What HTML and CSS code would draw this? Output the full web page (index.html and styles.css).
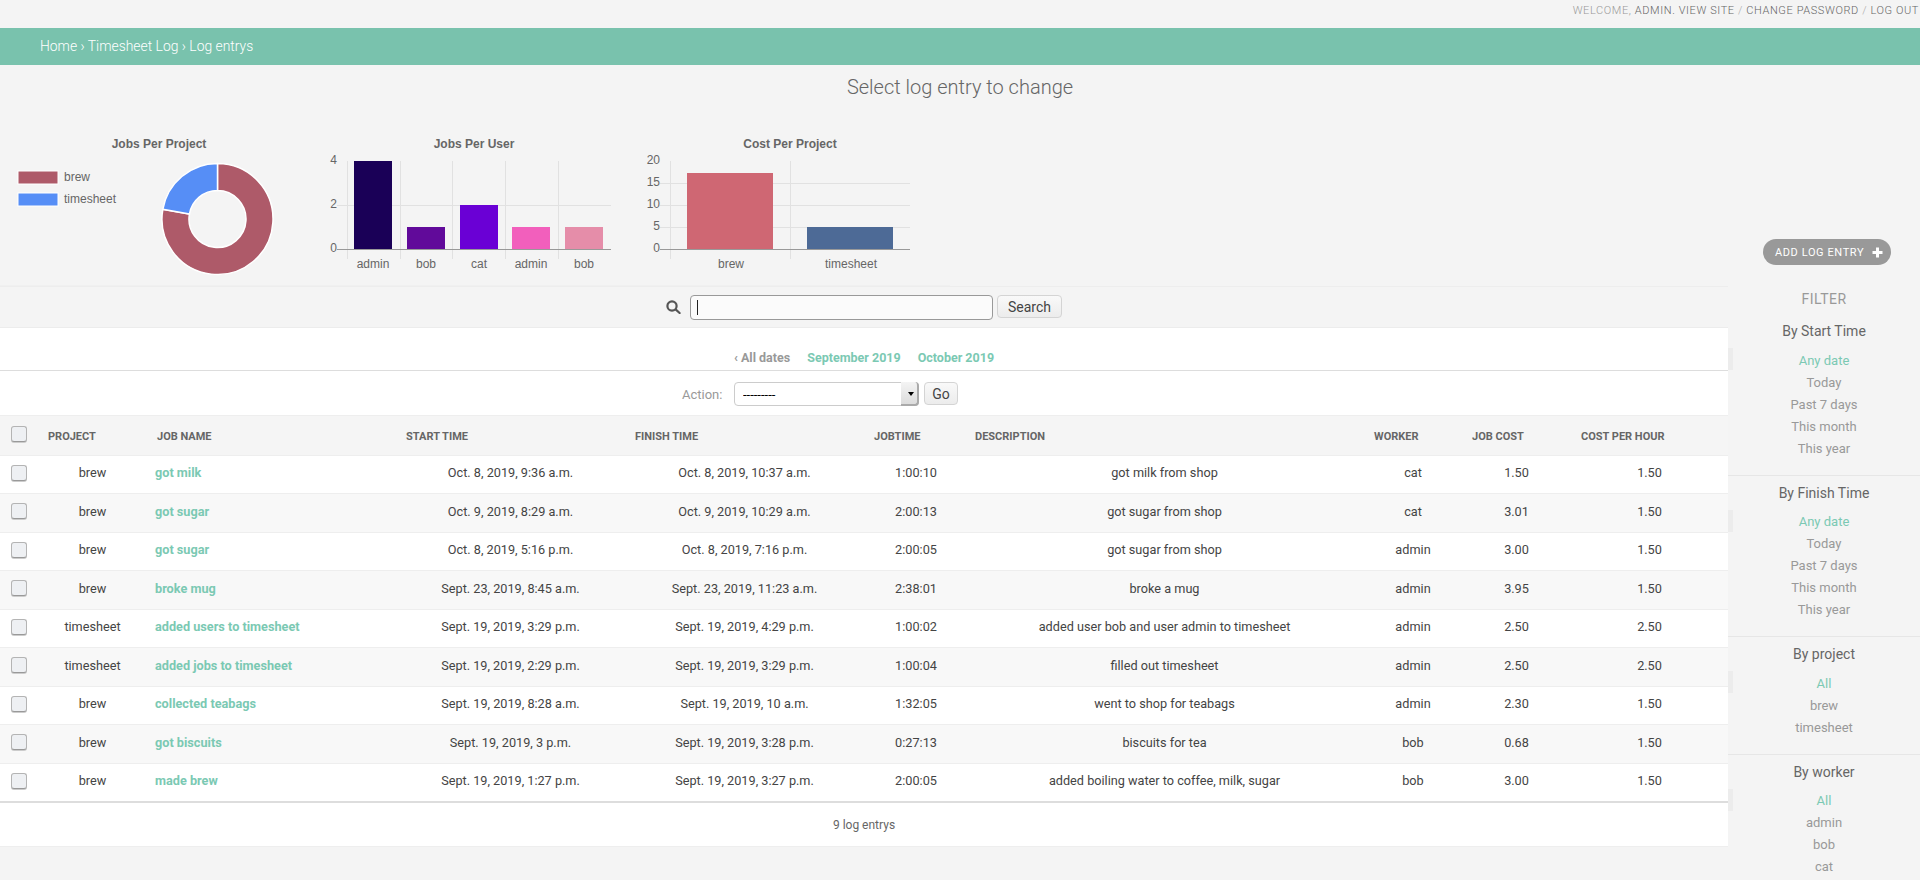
FILE: index.html
```html
<!DOCTYPE html>
<html lang="en">
<head>
<meta charset="utf-8">
<title>Select log entry to change</title>
<link rel="stylesheet" href="styles.css">
</head>
<body>
<div class="user-tools"><span class="welcome">Welcome,</span>&nbsp;<span class="who">Admin.</span>&nbsp;<a>View site</a> <span class="sep">/</span> <a>Change password</a> <span class="sep">/</span> <a>Log out</a></div>
<div class="crumbs"><a>Home</a> › <a>Timesheet Log</a> › Log entrys</div>
<h1 class="title">Select log entry to change</h1>
<div class="columns">
  <main class="main">
    <section class="charts">
      <svg class="chart chart-a" viewBox="0 110 310 175">
        <text class="chart-title" x="159" y="148">Jobs Per Project</text>
        <rect class="swatch" x="18" y="171" width="40" height="13" fill="#ae5a69"/>
        <text class="tick" x="64" y="181">brew</text>
        <rect class="swatch" x="18" y="193" width="40" height="13" fill="#568ef6"/>
        <text class="tick" x="64" y="203">timesheet</text>
        <path class="slice" fill="#ae5a69" d="M217.5 163.5A55.500 55.500 0 1 1 162.84 209.36L189.43 214.05A28.5 28.5 0 1 0 217.5 190.5Z"/>
        <path class="slice" fill="#568ef6" d="M162.84 209.36A55.500 55.500 0 0 1 217.5 163.5L217.5 190.5A28.5 28.5 0 0 0 189.43 214.05Z"/>
      </svg>
      <svg class="chart chart-b" viewBox="310 110 320 175">
        <text class="chart-title" x="474" y="148">Jobs Per User</text>
        <path class="grid" d="M347.5 161V259M400.5 161V259M452.5 161V259M505.5 161V259M558.5 161V259M337 205.500H611"/>
        <rect x="354" y="161" width="38" height="88" fill="#1a0057"/>
        <rect x="407" y="227" width="38" height="22" fill="#610a9a"/>
        <rect x="460" y="205" width="38" height="44" fill="#6a00d5"/>
        <rect x="512" y="227" width="38" height="22" fill="#f25fbc"/>
        <rect x="565" y="227" width="38" height="22" fill="#e58da9"/>
        <path class="axis" d="M337 249.5H611"/>
        <text class="tick end" x="337" y="164">4</text>
        <text class="tick end" x="337" y="208">2</text>
        <text class="tick end" x="337" y="252">0</text>
        <text class="tick mid" x="373" y="268">admin</text>
        <text class="tick mid" x="426" y="268">bob</text>
        <text class="tick mid" x="479" y="268">cat</text>
        <text class="tick mid" x="531" y="268">admin</text>
        <text class="tick mid" x="584" y="268">bob</text>
      </svg>
      <svg class="chart chart-c" viewBox="630 110 320 175">
        <text class="chart-title" x="790" y="148">Cost Per Project</text>
        <path class="grid" d="M670.5 161V259M790.5 161V259M660 183.5H910M660 205.500H910M660 227.500H910"/>
        <rect x="687" y="173" width="86" height="76" fill="#cf6773"/>
        <rect x="807" y="227" width="86" height="22" fill="#4d6a96"/>
        <path class="axis" d="M660 249.5H910"/>
        <text class="tick end" x="660" y="164">20</text>
        <text class="tick end" x="660" y="186">15</text>
        <text class="tick end" x="660" y="208">10</text>
        <text class="tick end" x="660" y="230">5</text>
        <text class="tick end" x="660" y="252">0</text>
        <text class="tick mid" x="731" y="268">brew</text>
        <text class="tick mid" x="851" y="268">timesheet</text>
      </svg>
    </section>
    <form class="toolbar">
      <svg class="search-icon" viewBox="0 0 15 14"><circle cx="6" cy="6" r="4.6"/><path d="M9.6 9.4L13.6 13"/></svg>
      <span class="search-field"><input class="search-input" type="text" value=""></span>
      <button class="btn search-btn" type="button">Search</button>
    </form>
    <nav class="dates">
      <a class="all-dates">‹ All dates</a>
      <a>September 2019</a>
      <a>October 2019</a>
    </nav>
    <div class="actions">
      <label class="action-label">Action:</label>
      <span class="select-wrap"><select class="select"><option>---------</option></select></span>
      <button class="btn go-btn" type="button">Go</button>
    </div>
    <table class="results">
      <colgroup>
        <col class="c-check"><col class="c-project"><col class="c-job"><col class="c-start"><col class="c-finish"><col class="c-time"><col class="c-desc"><col class="c-worker"><col class="c-cost"><col class="c-rate">
      </colgroup>
      <thead>
        <tr><th class="check"><input class="box" type="checkbox"></th><th>Project</th><th>Job name</th><th>Start time</th><th>Finish time</th><th>Jobtime</th><th>Description</th><th>Worker</th><th>Job cost</th><th>Cost per hour</th></tr>
      </thead>
      <tbody>
        <tr><td class="check"><input class="box" type="checkbox"></td><td>brew</td><td class="job"><a>got milk</a></td><td>Oct. 8, 2019, 9:36 a.m.</td><td>Oct. 8, 2019, 10:37 a.m.</td><td class="dur">1:00:10</td><td>got milk from shop</td><td>cat</td><td>1.50</td><td>1.50</td></tr>
        <tr><td class="check"><input class="box" type="checkbox"></td><td>brew</td><td class="job"><a>got sugar</a></td><td>Oct. 9, 2019, 8:29 a.m.</td><td>Oct. 9, 2019, 10:29 a.m.</td><td class="dur">2:00:13</td><td>got sugar from shop</td><td>cat</td><td>3.01</td><td>1.50</td></tr>
        <tr><td class="check"><input class="box" type="checkbox"></td><td>brew</td><td class="job"><a>got sugar</a></td><td>Oct. 8, 2019, 5:16 p.m.</td><td>Oct. 8, 2019, 7:16 p.m.</td><td class="dur">2:00:05</td><td>got sugar from shop</td><td>admin</td><td>3.00</td><td>1.50</td></tr>
        <tr><td class="check"><input class="box" type="checkbox"></td><td>brew</td><td class="job"><a>broke mug</a></td><td>Sept. 23, 2019, 8:45 a.m.</td><td>Sept. 23, 2019, 11:23 a.m.</td><td class="dur">2:38:01</td><td>broke a mug</td><td>admin</td><td>3.95</td><td>1.50</td></tr>
        <tr><td class="check"><input class="box" type="checkbox"></td><td>timesheet</td><td class="job"><a>added users to timesheet</a></td><td>Sept. 19, 2019, 3:29 p.m.</td><td>Sept. 19, 2019, 4:29 p.m.</td><td class="dur">1:00:02</td><td>added user bob and user admin to timesheet</td><td>admin</td><td>2.50</td><td>2.50</td></tr>
        <tr><td class="check"><input class="box" type="checkbox"></td><td>timesheet</td><td class="job"><a>added jobs to timesheet</a></td><td>Sept. 19, 2019, 2:29 p.m.</td><td>Sept. 19, 2019, 3:29 p.m.</td><td class="dur">1:00:04</td><td>filled out timesheet</td><td>admin</td><td>2.50</td><td>2.50</td></tr>
        <tr><td class="check"><input class="box" type="checkbox"></td><td>brew</td><td class="job"><a>collected teabags</a></td><td>Sept. 19, 2019, 8:28 a.m.</td><td>Sept. 19, 2019, 10 a.m.</td><td class="dur">1:32:05</td><td>went to shop for teabags</td><td>admin</td><td>2.30</td><td>1.50</td></tr>
        <tr><td class="check"><input class="box" type="checkbox"></td><td>brew</td><td class="job"><a>got biscuits</a></td><td>Sept. 19, 2019, 3 p.m.</td><td>Sept. 19, 2019, 3:28 p.m.</td><td class="dur">0:27:13</td><td>biscuits for tea</td><td>bob</td><td>0.68</td><td>1.50</td></tr>
        <tr><td class="check"><input class="box" type="checkbox"></td><td>brew</td><td class="job"><a>made brew</a></td><td>Sept. 19, 2019, 1:27 p.m.</td><td>Sept. 19, 2019, 3:27 p.m.</td><td class="dur">2:00:05</td><td>added boiling water to coffee, milk, sugar</td><td>bob</td><td>3.00</td><td>1.50</td></tr>
      </tbody>
    </table>
    <p class="paginator">9 log entrys</p>
    <span class="tab tab-1"></span>
    <span class="tab tab-2"></span>
    <span class="tab tab-3"></span>
    <span class="tab tab-4"></span>
  </main>
  <aside class="side">
    <a class="add-btn">Add log entry<svg class="plus" viewBox="0 0 11 11"><path d="M4 .5h3V4h3.500v3H7v3.500H4V7H.5V4H4z"/></svg></a>
    <h2 class="filter-title">Filter</h2>
    <section class="filter">
      <h3>By Start Time</h3>
      <ul><li class="on">Any date</li><li>Today</li><li>Past 7 days</li><li>This month</li><li>This year</li></ul>
    </section>
    <section class="filter">
      <h3>By Finish Time</h3>
      <ul><li class="on">Any date</li><li>Today</li><li>Past 7 days</li><li>This month</li><li>This year</li></ul>
    </section>
    <section class="filter">
      <h3>By project</h3>
      <ul><li class="on">All</li><li>brew</li><li>timesheet</li></ul>
    </section>
    <section class="filter">
      <h3>By worker</h3>
      <ul><li class="on">All</li><li>admin</li><li>bob</li><li>cat</li></ul>
    </section>
  </aside>
</div>
</body>
</html>
```

FILE: styles.css
```css
* { box-sizing: border-box; }
html, body { margin: 0; height: 880px; overflow: hidden; }
body { background: #f4f4f4; color: #444; font-family: Roboto, "Liberation Sans", sans-serif; font-size: 13px; }
h1, h2, h3, p, ul { margin: 0; padding: 0; }
ul { list-style: none; }

.user-tools { height: 28px; padding-right: 1px; line-height: 22px; text-align: right; text-transform: uppercase; font-size: 11px; font-weight: 300; letter-spacing: .6px; color: #999; white-space: nowrap; }
.user-tools a, .user-tools .who { color: #666; }
.user-tools .sep { color: #aaa; }

.crumbs { height: 37px; padding-left: 40px; line-height: 36px; background: #79c2ad; color: #fff; font-size: 13.9px; font-weight: 300; }

.title { height: 45px; padding-top: 10px; line-height: 24px; text-align: center; font-size: 20px; font-weight: 300; color: #666; }

.columns { display: flex; align-items: flex-start; }
.main { position: relative; flex: 0 0 1728px; width: 1728px; }
.side { flex: 0 0 192px; width: 192px; padding-top: 129px; text-align: center; }

.charts { display: flex; width: 950px; height: 177px; border-bottom: 2px solid #f0f0f0; }
.chart { display: block; height: 175px; font-family: "Liberation Sans", Arial, sans-serif; }
.chart-a { width: 310px; }
.chart-b, .chart-c { width: 320px; }
.chart-title { font-size: 12px; font-weight: 700; fill: #666; text-anchor: middle; }
.tick { font-size: 12px; fill: #666; }
.tick.end { text-anchor: end; }
.tick.mid { text-anchor: middle; }
.swatch { stroke: #fff; stroke-width: 1; }
.slice { stroke: #fff; stroke-width: 1.5; }
.grid { fill: none; stroke: #e1e1e1; stroke-width: 1; }
.axis { fill: none; stroke: #999; stroke-width: 1; }

.toolbar { display: flex; justify-content: center; align-items: flex-start; gap: 4px; height: 42px; padding-top: 8px; border-top: 1px solid #ededed; border-bottom: 1px solid #ececec; margin-top: -1px; }
.search-icon { width: 15px; height: 14px; margin: 5px 5px 0 0; fill: none; stroke: #555; stroke-width: 2.2; stroke-linecap: round; }
.search-field { position: relative; display: block; }
.search-field::after { content: ""; position: absolute; left: 7px; top: 5px; width: 1px; height: 15px; background: #222; }
.search-input { display: block; width: 303px; height: 25px; padding: 0 6px; background: #fbfbfb; border: 1px solid #999; border-radius: 4px; outline: 0; font: inherit; }
.btn { display: block; background: linear-gradient(#f9f9f9, #ececec); border: 1px solid #d4d4d4; border-radius: 4px; color: #444; font-family: inherit; font-size: 14px; padding: 0; }
.search-btn { width: 65px; height: 23px; }

.dates { display: flex; justify-content: center; align-items: flex-end; gap: 17px; height: 43px; padding-bottom: 4px; background: #fff; border-bottom: 1px solid #ddd; font-size: 12.5px; font-weight: 700; line-height: 16px; color: #7bc9b3; }
.all-dates { color: #999; }

.actions { display: flex; align-items: flex-start; height: 45px; padding: 11px 0 0 682px; background: #fff; border-bottom: 1px solid #eee; }
.action-label { width: 52px; line-height: 25px; color: #999; }
.select-wrap { position: relative; display: block; margin-right: 5px; }
.select-wrap::after { content: ""; position: absolute; right: 0; top: 0; bottom: 0; width: 16px; background: linear-gradient(#f4f4f4, #dcdcdc); border-right: 2px solid #aaa; border-bottom: 2px solid #aaa; border-radius: 0 4px 4px 0; }
.select-wrap::before { content: ""; position: absolute; z-index: 1; right: 5px; top: 10px; border-style: solid; border-width: 4px 3px 0; border-color: #000 transparent transparent; }
.select { display: block; appearance: none; width: 185px; height: 24px; padding: 0 8px; background: #fff; border: 1px solid #ccc; border-radius: 4px; color: #000; font-family: inherit; font-size: 13px; }
.go-btn { width: 34px; height: 23px; }

.results { table-layout: fixed; width: 1728px; border-collapse: collapse; background: #fff; border-bottom: 2px solid #ddd; }
.c-check { width: 38px; }
.c-project { width: 109px; }
.c-job { width: 249px; }
.c-start { width: 229px; }
.c-finish { width: 239px; }
.c-time { width: 101px; }
.c-desc { width: 399px; }
.c-worker { width: 98px; }
.c-cost { width: 109px; }
.c-rate { width: 157px; }
.results th { height: 39px; padding: 3px 10px 0; background: #f5f5f5; border-bottom: 1px solid #eee; text-align: left; text-transform: uppercase; font-size: 11px; font-weight: 700; color: #666; }
.results td { height: 38.5px; padding: 0 8px 3px; border-bottom: 1px solid #eee; text-align: center; color: #444; font-size: 12.7px; }
.results tbody tr:last-child td { border-bottom: 0; }
.results tbody tr:nth-child(even) td { background: #f8f8f8; }
.results .check { padding: 0 0 3px 11px; text-align: left; }
.results .job { text-align: left; padding-left: 8px; font-weight: 700; color: #7bc9b3; }
.results .dur { padding-left: 11px; }
.box { display: block; appearance: none; width: 16px; height: 16px; margin: 0; background: #eef0f3; border: 1px solid #b4b4b4; border-bottom-color: #999; border-radius: 3px; box-shadow: 0 1px 0 #ccc; }

.paginator { height: 44px; background: #fff; border-bottom: 1px solid #eee; line-height: 45px; text-align: center; font-size: 12px; color: #666; }

.tab { position: absolute; left: 100%; width: 5px; height: 22px; background: #ececec; }
.tab-1 { top: 238px; }
.tab-2 { top: 400px; }
.tab-3 { top: 561px; }
.tab-4 { top: 679px; }

.add-btn { display: flex; align-items: center; width: 128px; height: 26px; margin-left: 35px; padding-left: 12px; background: #999; border-radius: 13px; color: #fff; text-transform: uppercase; font-size: 11px; letter-spacing: .6px; white-space: nowrap; }
.plus { width: 11px; height: 11px; margin-left: 8px; fill: #fff; }
.filter-title { height: 22px; margin: 23px 0 10px; line-height: 22px; text-transform: uppercase; font-size: 14px; font-weight: 400; letter-spacing: .5px; color: #999; }
.filter { padding: 0 0 15px; border-bottom: 1px solid #e6e6e6; }
.filter + .filter { padding-top: 6px; }
.filter:last-child { border-bottom: 0; }
.filter h3 { height: 22px; margin-bottom: 7.5px; line-height: 22px; font-size: 14px; font-weight: 400; color: #666; }
.filter li { height: 22px; line-height: 22px; color: #999; }
.filter li.on { color: #7bc9b3; }
```
